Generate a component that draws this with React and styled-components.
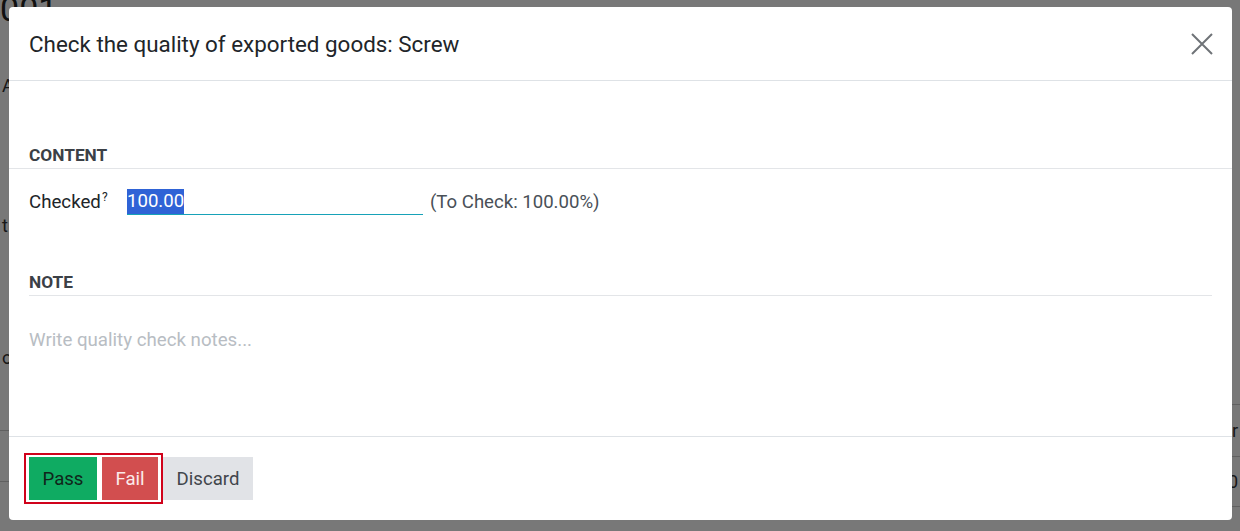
import React from "react";
import styled, { createGlobalStyle } from "styled-components";

const Global = createGlobalStyle`
  html, body { margin: 0; padding: 0; }
  body {
    width: 1240px; height: 531px; overflow: hidden;
    font-family: Roboto, "Noto Sans", sans-serif;
    background: #fff;
  }
`;

const Page = styled.div`
  position: relative;
  width: 1240px;
  height: 531px;
  overflow: hidden;
  background: #fff;
  color: #111;
`;

const BgHeading = styled.div`
  font-size: 34px;
  line-height: 30px;
  margin: -6px 0 0 -19px;
  color: #222;
`;

const BgSide = styled.div`
  display: flex;
  flex-direction: column;
  font-size: 18px;
  color: #333;
`;

const BgLine = styled.div`
  height: ${(p) => p.$h}px;
  display: flex;
  align-items: center;
  border-bottom: ${(p) => (p.$border ? "1px solid #ccc" : "none")};
  justify-content: ${(p) => (p.$right ? "flex-end" : "flex-start")};
  padding: 0 2px;
`;

const BgRows = styled.div`
  display: flex;
  justify-content: space-between;
`;

const Overlay = styled.div`
  position: absolute;
  inset: 0;
  background: rgba(0, 0, 0, 0.53);
  padding: 7px 8px 11px 9px;
  box-sizing: border-box;
`;

const Modal = styled.div`
  width: 1223px;
  height: 513px;
  background: #fff;
  border-radius: 4px;
  display: flex;
  flex-direction: column;
  overflow: hidden;
`;

const Header = styled.header`
  height: 74px;
  flex: none;
  box-sizing: border-box;
  border-bottom: 1px solid #dee2e6;
  display: flex;
  align-items: center;
  justify-content: space-between;
  padding: 0 19px 0 20px;
`;

const Title = styled.h4`
  margin: 0;
  font-size: 22.4px;
  font-weight: 400;
  color: #212529;
`;

const CloseBtn = styled.button`
  border: 0;
  background: transparent;
  padding: 0;
  width: 22px;
  height: 22px;
  display: flex;
  cursor: pointer;
`;

const Body = styled.div`
  flex: 1;
  padding: 62px 20px 0;
  display: flex;
  flex-direction: column;
`;

const SectionTitle = styled.div`
  font-size: 17.3px;
  line-height: 24px;
  font-weight: 700;
  text-transform: uppercase;
  color: #3b4046;
  border-bottom: 1px solid #e3e5e8;
  margin: ${(p) => (p.$full ? "0 -20px" : "0")};
  padding: ${(p) => (p.$full ? "0 20px 1px" : "0 0 1px")};
  margin-top: ${(p) => p.$mt || 0}px;
`;

const FieldRow = styled.div`
  display: flex;
  align-items: center;
  margin-top: 20px;
  height: 26px;
`;

const Label = styled.label`
  font-size: 18.7px;
  color: #212529;
  width: 98px;
  flex: none;
  white-space: nowrap;
  sup {
    font-size: 12px;
    margin-left: 1px;
  }
`;

const InputBox = styled.div`
  width: 296px;
  height: 26px;
  box-sizing: border-box;
  border-bottom: 1px solid #17a2b8;
  display: flex;
  align-items: flex-start;
  font-size: 18.6px;
`;

const Selected = styled.span`
  background: #2f63d6;
  color: #fff;
  line-height: 25px;
`;

const Hint = styled.span`
  font-size: 18.6px;
  color: #495057;
  margin-left: 7px;
`;

const Placeholder = styled.div`
  font-size: 18.7px;
  line-height: 24px;
  color: #b8bdc3;
  margin-top: 32px;
`;

const Footer = styled.footer`
  flex: none;
  height: 84px;
  box-sizing: border-box;
  border-top: 1px solid #dee2e6;
  padding: 16px 15px;
  display: flex;
  align-items: flex-start;
`;

const Highlight = styled.div`
  display: flex;
  gap: 5px;
  border: 2px solid #d0021b;
  padding: 2px 3px;
`;

const Btn = styled.button`
  height: 43px;
  width: ${(p) => p.$w}px;
  border: 0;
  border-radius: 0;
  padding: 0;
  font-family: inherit;
  font-size: 18.6px;
  cursor: pointer;
  background: ${(p) => p.$bg};
  color: ${(p) => p.$fg};
`;

const DiscardWrap = styled.div`
  padding-top: 4px;
`;

export default function App() {
  return (
    <Page>
      <Global />
      <BgHeading>0001</BgHeading>
      <BgRows>
        <BgSide>
          <BgLine $h={35}>&nbsp;</BgLine>
          <BgLine $h={53}>A</BgLine>
          <BgLine $h={226}>t</BgLine>
          <BgLine $h={38}>o</BgLine>
          <BgLine $h={54} $border>&nbsp;</BgLine>
          <BgLine $h={50} $border>&nbsp;</BgLine>
        </BgSide>
        <BgSide>
          <BgLine $h={352}>&nbsp;</BgLine>
          <BgLine $h={28} $border>&nbsp;</BgLine>
          <BgLine $h={51} $border $right>ar</BgLine>
          <BgLine $h={49} $border $right>0</BgLine>
        </BgSide>
      </BgRows>
      <Overlay>
        <Modal role="dialog">
          <Header>
            <Title>Check the quality of exported goods: Screw</Title>
            <CloseBtn aria-label="Close">
              <svg width="22" height="22" viewBox="0 0 22 22">
                <path d="M1 1 L21 21 M21 1 L1 21" stroke="#6f7377" strokeWidth="2" fill="none" />
              </svg>
            </CloseBtn>
          </Header>
          <Body>
            <SectionTitle $full>Content</SectionTitle>
            <FieldRow>
              <Label>
                Checked<sup>?</sup>
              </Label>
              <InputBox>
                <Selected>100.00</Selected>
              </InputBox>
              <Hint>(To Check: 100.00%)</Hint>
            </FieldRow>
            <SectionTitle $mt={55}>Note</SectionTitle>
            <Placeholder>Write quality check notes...</Placeholder>
          </Body>
          <Footer>
            <Highlight>
              <Btn $w={68} $bg="#0fab62" $fg="#10251a">Pass</Btn>
              <Btn $w={56} $bg="#d24e4f" $fg="#fbeaea">Fail</Btn>
            </Highlight>
            <DiscardWrap>
              <Btn $w={90} $bg="#e1e3e7" $fg="#41464c">Discard</Btn>
            </DiscardWrap>
          </Footer>
        </Modal>
      </Overlay>
    </Page>
  );
}
